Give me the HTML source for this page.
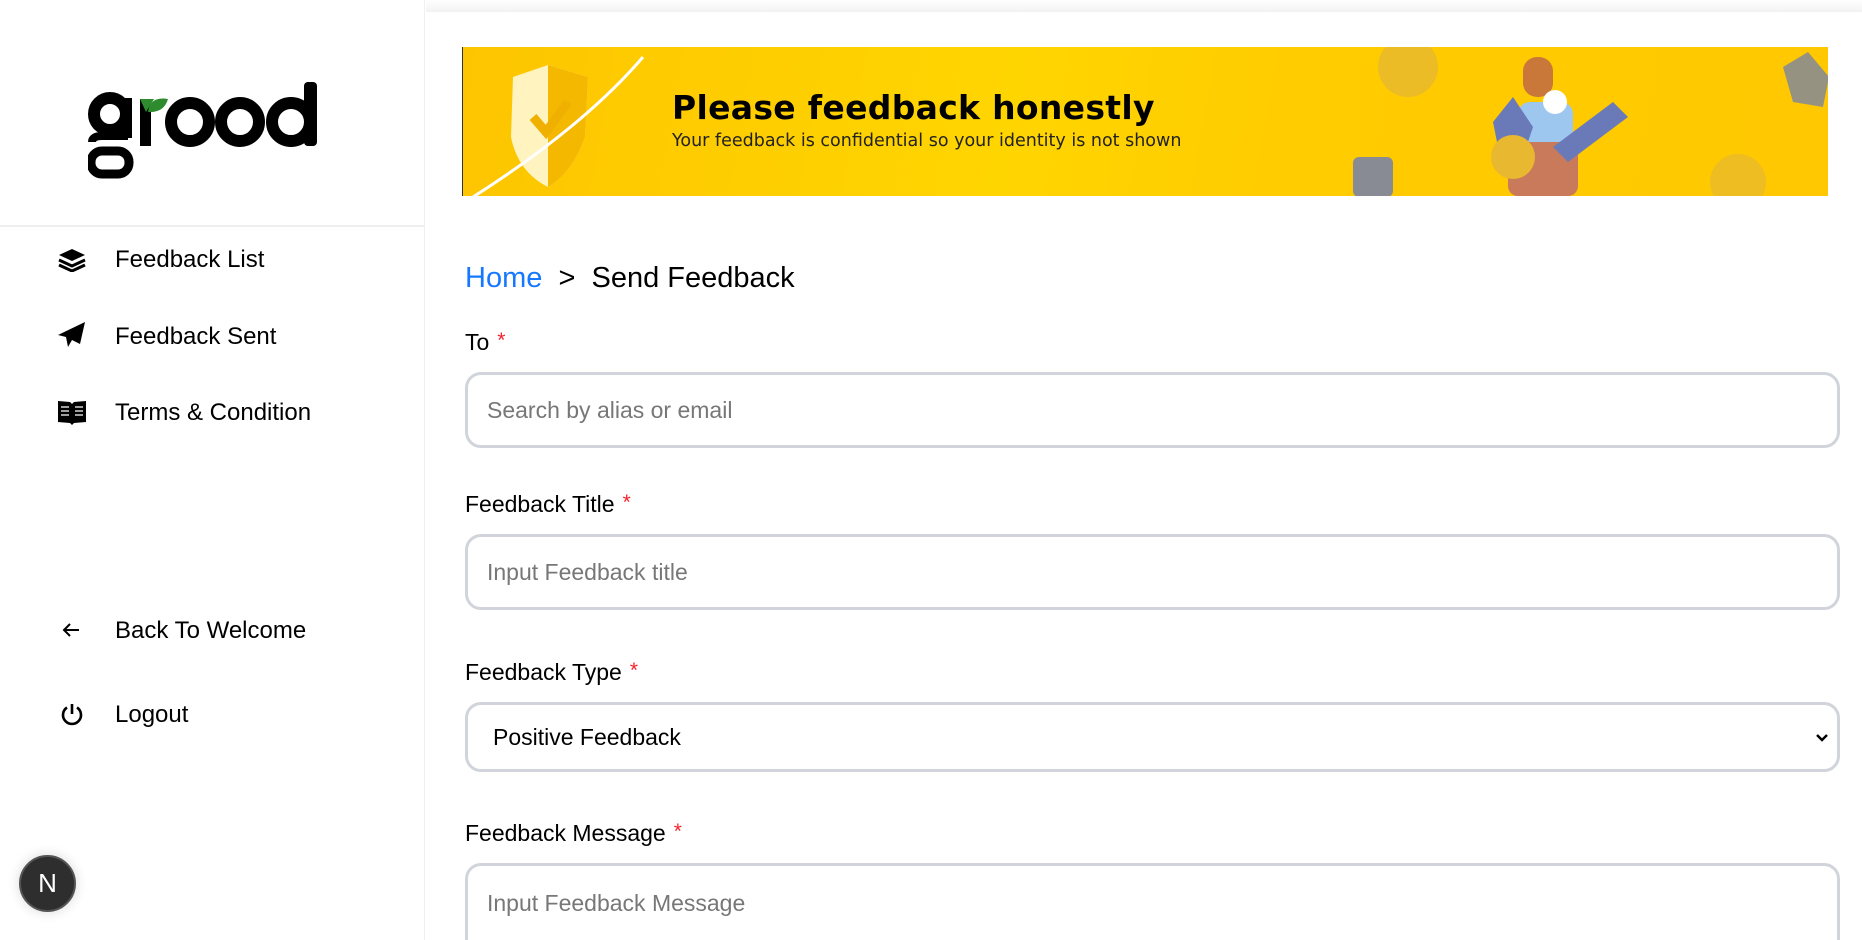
<!DOCTYPE html>
<html style="width:1862px;height:940px;overflow:hidden"><head><meta charset="utf-8"><style>
*{box-sizing:border-box;margin:0;padding:0}
html,body{width:1862px;height:940px;overflow:hidden}
body{background:#fff;font-family:"Liberation Sans",Arial,sans-serif;position:relative;color:#000}
.side{position:absolute;left:0;top:0;width:425px;height:940px;background:#fff;border-right:1px solid #f0f0f0}
.topshade{position:absolute;left:426px;right:0;top:0;height:12px;background:linear-gradient(#fff,#f2f2f2)}
.divider{position:absolute;left:0;width:425px;top:225px;height:2px;background:#eeeeee}
.nav{position:absolute;left:115px;font-size:24px;line-height:1}
.ico{position:absolute;left:58px}
.banner{position:absolute;left:462px;top:47px;width:1366px;height:149px;background:linear-gradient(100deg,#fdc500 0%,#ffd500 40%,#ffcc00 60%,#ffc800 100%);overflow:hidden;border-left:1px solid #333}
.bt{position:absolute;left:209px;top:41px;font-size:33px;font-weight:bold;letter-spacing:.3px;font-family:"DejaVu Sans","Liberation Sans",sans-serif}
.bs{position:absolute;left:209px;top:84px;font-size:17.5px;color:#222;font-family:"DejaVu Sans","Liberation Sans",sans-serif}
.crumb{position:absolute;left:465px;top:262px;font-size:29px}
.lbl{position:absolute;left:465px;font-size:23px}
.lbl span{color:#f5222d;font-size:21px;position:relative;top:-3px;margin-left:8px}
.inp{position:absolute;left:465px;width:1375px;border:3px solid #d1d5db;border-radius:16px;font-size:23px;color:#777;padding-left:19px;display:flex;align-items:center}
.nbtn{position:absolute;left:19px;top:855px;width:57px;height:57px;border-radius:50%;background:#2e2e2e;border:2px solid #555;box-shadow:0 0 12px rgba(0,0,0,.15);color:#fff;font-size:26px;display:flex;align-items:center;justify-content:center}
</style></head><body>
<div class="side">
<svg style="position:absolute;left:88px;top:82px" width="244" height="98" viewBox="0 0 244 98">
<circle cx="22" cy="32" r="16" fill="none" stroke="#000" stroke-width="12"/>
<rect x="32" y="16" width="12" height="40" fill="#000"/>
<rect x="3" y="69" width="38" height="23" rx="11" fill="none" stroke="#000" stroke-width="9"/>
<path d="M4 60 Q4 54 14 54 L40 54" stroke="#000" stroke-width="8" fill="none"/>
<rect x="52" y="17" width="11" height="47" fill="#000"/>
<path d="M52 17 L66 17 L58 30 Z" fill="#2e8b2e"/>
<path d="M60 30 Q62 14 80 17 Q76 31 60 30 Z" fill="#2e8b2e"/>
<circle cx="102" cy="40" r="19" fill="none" stroke="#000" stroke-width="12"/>
<circle cx="152" cy="40" r="19" fill="none" stroke="#000" stroke-width="12"/>
<circle cx="203" cy="40" r="19" fill="none" stroke="#000" stroke-width="12"/>
<rect x="216" y="0" width="13" height="64" rx="4" fill="#000"/>
</svg>
</div>
<div class="divider"></div>
<div class="topshade"></div>
<svg class="ico" style="top:248px" width="28" height="24" viewBox="0 0 28 24"><path d="M14 1 L27 7 L14 13 L1 7Z" fill="#000"/><path d="M1 12 L14 18 L27 12" stroke="#000" stroke-width="3" fill="none"/><path d="M1 17 L14 23 L27 17" stroke="#000" stroke-width="3" fill="none"/></svg>
<div class="nav" style="top:248px">Feedback List</div>
<svg class="ico" style="top:322px" width="28" height="26" viewBox="0 0 28 26"><path d="M27 0 L0 13 L8 15 L10 25 L14 18 L22 22Z" fill="#000"/></svg>
<div class="nav" style="top:325px">Feedback Sent</div>
<svg class="ico" style="top:399px" width="28" height="27" viewBox="0 0 28 27"><path d="M0 2 L12 3 L14 5 L16 3 L28 2 L28 23 L16 24 L14 26 L12 24 L0 23Z" fill="#000"/><g stroke="#fff" stroke-width="1.3"><path d="M3 8h8M3 12h8M3 16h8M17 8h8M17 12h8M17 16h8"/></g></svg>
<div class="nav" style="top:401px">Terms &amp; Condition</div>
<svg class="ico" style="top:622px;left:62px" width="18" height="16" viewBox="0 0 18 16"><path d="M17 8H3M8 2L2 8L8 14" stroke="#000" stroke-width="2" fill="none"/></svg>
<div class="nav" style="top:619px">Back To Welcome</div>
<svg class="ico" style="top:702px;left:60px" width="24" height="24" viewBox="0 0 24 24"><path d="M7 5.5A9 9 0 1 0 17 5.5" stroke="#000" stroke-width="2.6" fill="none"/><path d="M12 2V12" stroke="#000" stroke-width="2.6"/></svg>
<div class="nav" style="top:703px">Logout</div>
<div class="nbtn">N</div>

<div class="banner">
<svg style="position:absolute;left:0;top:0" width="1366" height="149">
<path d="M50 30 L85 18 L125 30 L122 90 Q110 125 85 140 Q55 125 48 90Z" fill="#fff3c0"/>
<path d="M85 18 L125 30 L122 90 Q110 125 85 140Z" fill="#f5b800"/>
<path d="M70 70 L83 85 L105 55" stroke="#f0b000" stroke-width="9" fill="none"/>
<path d="M10 150 Q120 80 180 10" stroke="#fff" stroke-width="3" fill="none"/>
<circle cx="945" cy="20" r="30" fill="#e6b830" opacity=".8"/>
<circle cx="1275" cy="135" r="28" fill="#e6b830" opacity=".7"/>
<rect x="890" y="110" width="40" height="40" rx="6" fill="#6a7ab8" opacity=".8"/>
<path d="M1320 20 L1345 5 L1366 30 L1360 60 L1330 55Z" fill="#6a7ab8" opacity=".7"/>
<rect x="1060" y="10" width="30" height="40" rx="14" fill="#c9783a"/>
<rect x="1055" y="55" width="55" height="94" rx="12" fill="#9ec7f0"/>
<rect x="1045" y="95" width="70" height="54" rx="10" fill="#c97a5a"/>
<path d="M1030 75 L1050 50 L1070 80 L1060 110 L1035 100Z" fill="#6a7ab8"/>
<circle cx="1050" cy="110" r="22" fill="#e8b830"/>
<path d="M1090 100 L1150 55 L1165 70 L1105 115Z" fill="#6a7ab8"/>
<circle cx="1092" cy="55" r="12" fill="#fff"/>
</svg>
<div class="bt">Please feedback honestly</div>
<div class="bs">Your feedback is confidential so your identity is not shown</div>
</div>

<div class="crumb"><span style="color:#1677ff">Home</span> &nbsp;&gt;&nbsp; Send Feedback</div>
<div class="lbl" style="top:329px">To<span>*</span></div>
<div class="inp" style="top:372px;height:76px">Search by alias or email</div>
<div class="lbl" style="top:491px">Feedback Title<span>*</span></div>
<div class="inp" style="top:534px;height:76px">Input Feedback title</div>
<div class="lbl" style="top:659px">Feedback Type<span>*</span></div>
<div class="inp" style="top:702px;height:70px;color:#000;padding-left:25px">Positive Feedback
<svg style="position:absolute;right:8px;top:28px" width="14" height="10" viewBox="0 0 14 10"><path d="M2 2L7 7L12 2" stroke="#000" stroke-width="2.4" fill="none"/></svg></div>
<div class="lbl" style="top:820px">Feedback Message<span>*</span></div>
<div class="inp" style="top:863px;height:110px;align-items:flex-start;padding-top:24px">Input Feedback Message</div>
</body></html>
